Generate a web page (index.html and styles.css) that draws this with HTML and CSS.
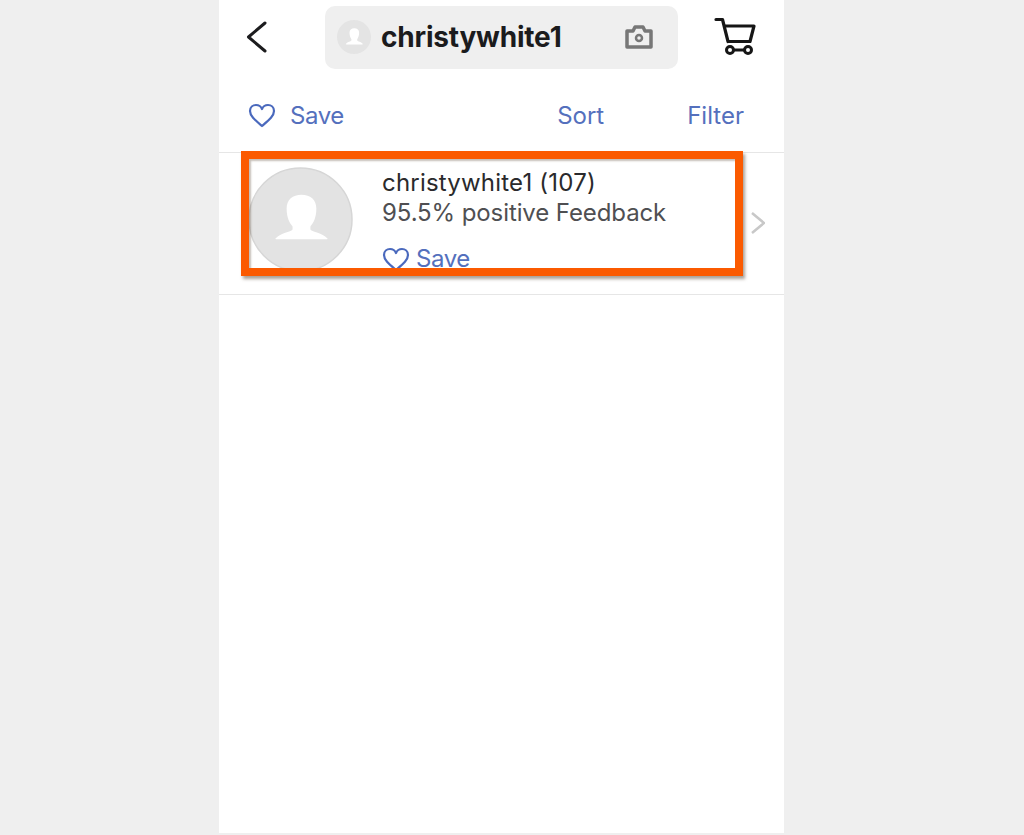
FILE: index.html
```html
<!DOCTYPE html>
<html lang="en">
<head>
  <meta charset="UTF-8" />
  <meta name="viewport" content="width=device-width, initial-scale=1.0" />
  <title>christywhite1</title>
  <link rel="stylesheet" href="styles.css">
</head>
<body>
  <div class="screen">

    <!-- top bar -->
    <header class="top-bar">
      <svg class="back-icon" width="24" height="34" viewBox="0 0 24 34">
        <path d="M19 3 L2.500 17 L19 31" fill="none" stroke="#1c1c1e" stroke-width="3" stroke-linecap="round" stroke-linejoin="round"/>
      </svg>
      <div class="search-pill">
        <svg class="avatar-small" width="34" height="34" viewBox="0 0 106 106">
          <circle cx="53" cy="53" r="53" fill="#e4e4e4"/>
          <path d="M54 26c-9 0-15 5-15 14 0 9 3 16 6 20v4c-2 3-12 4-17 10-1 1 0 2 1 2h50c1 0 2-1 1-2-5-6-15-7-17-10v-4c3-4 6-11 6-20 0-9-6-14-15-14z" fill="#fff"/>
        </svg>
        <span class="search-name">christywhite1</span>
        <svg class="camera-icon" width="30" height="26" viewBox="0 0 30 26">
          <path d="M3 7h6l2-4h8l2 4h6v16H3z" fill="none" stroke="#777" stroke-width="3.500" stroke-linejoin="round"/>
          <circle cx="15" cy="14" r="3" fill="none" stroke="#777" stroke-width="2.500"/>
        </svg>
      </div>
      <svg class="cart-icon" width="42" height="40" viewBox="0 0 42 40">
        <path d="M2 2.500h6.500l5.500 22" fill="none" stroke="#161616" stroke-width="3.200" stroke-linejoin="round" stroke-linecap="round"/>
        <path d="M9 9h31l-4 15.500H14" fill="none" stroke="#161616" stroke-width="3.200" stroke-linejoin="round"/>
        <path d="M16 33h18" stroke="#161616" stroke-width="3"/>
        <circle cx="16" cy="33" r="3.500" fill="#fff" stroke="#161616" stroke-width="3"/>
        <circle cx="34" cy="33" r="3.500" fill="#fff" stroke="#161616" stroke-width="3"/>
      </svg>
    </header>

    <!-- save / sort / filter -->
    <div class="action-bar">
      <a class="link save-link">
        <svg class="heart" width="28" height="25" viewBox="0 0 28 25">
          <path d="M14 23 C7 17 2 13 2 8 C2 4 5 2 8 2 C10.500 2 13 3.500 14 6 C15 3.500 17.500 2 20 2 C23 2 26 4 26 8 C26 13 21 17 14 23z" fill="none" stroke="#4a69bd" stroke-width="2.200" stroke-linejoin="round"/>
        </svg>
        <span class="save-text">Save</span>
      </a>
      <a class="link sort-link">Sort</a>
      <a class="link">Filter</a>
    </div>

    <!-- seller row -->
    <div class="seller-row">
      <svg class="avatar" width="105" height="105" viewBox="0 0 106 106">
        <circle cx="53" cy="53" r="52" fill="#e3e3e3" stroke="#d6d6d6" stroke-width="1.500"/>
        <path d="M54 28c-9 0-15 5-15 14 0 9 3 15 6 18v3c-2 3-12 3-17 9-1 1 0 1 1 1h50c1 0 2 0 1-1-5-6-15-6-17-9v-3c3-3 6-9 6-18 0-9-6-14-15-14z" fill="#fff"/>
      </svg>
      <div class="seller-info">
        <div class="seller-name">christywhite1 (107)</div>
        <div class="seller-feedback">95.5% positive Feedback</div>
        <a class="link seller-save">
          <svg class="heart" width="28" height="25" viewBox="0 0 28 25">
            <path d="M14 23 C7 17 2 13 2 8 C2 4 5 2 8 2 C10.500 2 13 3.500 14 6 C15 3.500 17.500 2 20 2 C23 2 26 4 26 8 C26 13 21 17 14 23z" fill="none" stroke="#4a69bd" stroke-width="2.200" stroke-linejoin="round"/>
          </svg>
          <span class="save-text">Save</span>
        </a>
      </div>
      <svg class="chevron" width="16" height="24" viewBox="0 0 16 24">
        <path d="M3 2 L15 12 L3 22" fill="none" stroke="#c8c8c8" stroke-width="2.500"/>
      </svg>
      <div class="highlight-box"></div>
    </div>

  </div>
</body>
</html>
```

FILE: styles.css
```css
body {
  margin: 0;
  background-color: #efefef;
  font-family: Inter, 'Liberation Sans', sans-serif;
  color: #333;
}

.screen {
  width: 565px;
  height: 833px;
  margin-left: 219px;
  background-color: #fff;
}

.top-bar {
  display: flex;
  align-items: center;
  height: 74px;
  padding: 0 28px 0 27px;
  box-sizing: border-box;
}

.back-icon {
  margin-right: 55px;
}

.search-pill {
  display: flex;
  align-items: center;
  width: 353px;
  height: 63px;
  padding: 0 24px 0 12px;
  box-sizing: border-box;
  background-color: #efefef;
  border-radius: 10px;
}

.search-name {
  flex: 1;
  margin-left: 10px;
  font-size: 28px;
  font-weight: 700;
  letter-spacing: -0.2px;
  color: #1b1b1d;
}

.cart-icon {
  margin-left: auto;
}

.action-bar {
  display: flex;
  align-items: center;
  height: 79px;
  padding: 4px 40px 0 29px;
  box-sizing: border-box;
  border-bottom: 1px solid #e6e6e6;
}

.link {
  display: flex;
  align-items: center;
  font-size: 24px;
  color: #5470bd;
}

.save-text {
  letter-spacing: -0.4px;
}

.save-link {
  gap: 14px;
  margin-right: auto;
}

.sort-link {
  margin-right: 83px;
}

.seller-row {
  position: relative;
  display: flex;
  align-items: flex-start;
  height: 142px;
  padding: 14px 19px 0 29px;
  box-sizing: border-box;
  border-bottom: 1px solid #e6e6e6;
}

.avatar {
  flex-shrink: 0;
}

.seller-info {
  flex: 1;
  margin: 1px 0 0 29px;
  font-size: 24px;
  line-height: 30px;
}

.seller-name {
  letter-spacing: 0.2px;
  color: #2a2a2c;
}

.seller-feedback {
  letter-spacing: -0.1px;
  color: #4f4f52;
}

.seller-save {
  gap: 6px;
  margin-top: 16px;
}

.chevron {
  margin-top: 44px;
}

/* orange annotation drawn over the row */
.highlight-box {
  position: absolute;
  top: -2px;
  left: 22px;
  width: 502px;
  height: 125px;
  box-sizing: border-box;
  border: 8px solid #fb5a00;
  box-shadow: 2px 3px 3px rgba(90, 70, 50, 0.5), inset 2px 2px 2px rgba(90, 70, 50, 0.35);
}
```
